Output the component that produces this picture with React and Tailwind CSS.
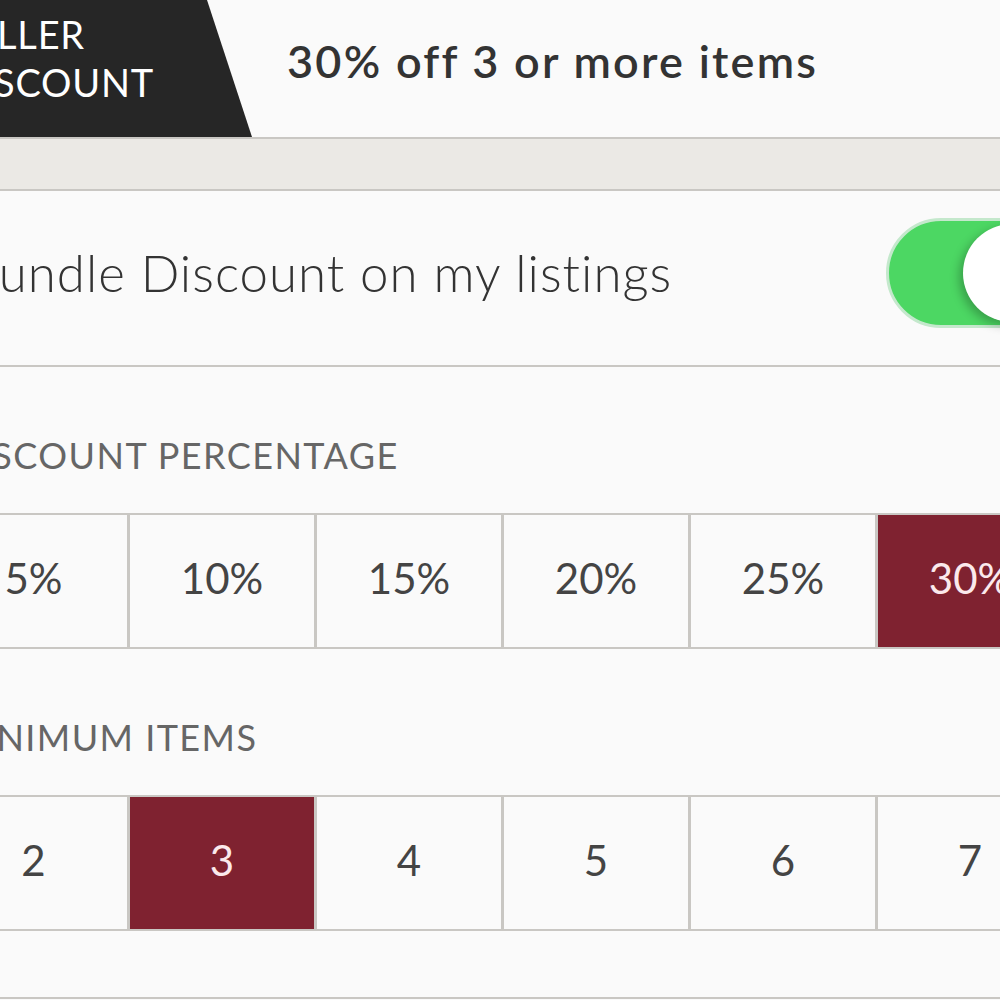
import React from 'react';

const percents = ['5%', '10%', '15%', '20%', '25%', '30%'];
const items = ['2', '3', '4', '5', '6', '7'];

function OptionRow({ options, selected }) {
  return (
    <div className="grid grid-cols-[repeat(6,187px)] h-[136px] border-y-2 border-[#c9c7c3] -ml-[60px] w-[1122px]">
      {options.map((opt, i) => {
        const active = opt === selected;
        return (
          <div
            key={opt}
            className={
              'flex items-center justify-center pb-[6px] text-[42px] ' +
              (i > 0 ? 'border-l-[3px] border-[#c9c7c3] ' : '') +
              (active ? 'bg-[#7f2230] text-[#fbe9ec]' : 'bg-[#fafafa] text-[#444]')
            }
          >
            {opt}
          </div>
        );
      })}
    </div>
  );
}

export default function App() {
  return (
    <div
      className="w-[1000px] h-[1000px] overflow-hidden bg-[#fafafa] text-[#333]"
      style={{ fontFamily: 'Lato, "Noto Sans", sans-serif' }}
    >
      <header className="relative flex items-center h-[139px] border-b-2 border-[#c9c7c3] bg-[#fafafa]">
        <div className="h-full w-[252px] shrink-0 bg-[#262626] [clip-path:polygon(0_0,207px_0,252px_100%,0_100%)] flex flex-col justify-center pb-[22px]">
          <div className="-ml-[47px] text-white text-[38px] leading-[48px] tracking-[0.02em]">
            <p>SELLER</p>
            <p>DISCOUNT</p>
          </div>
        </div>
        <h1 className="ml-[35px] -mt-[14px] text-[45px] font-semibold tracking-[0.05em] text-[#333]">30% off 3 or more items</h1>
      </header>

      <div className="h-[52px] bg-[#ebe9e5] border-b-2 border-[#c9c7c3]" />

      <section className="h-[176px] flex items-center justify-between border-b-2 border-[#c9c7c3]">
        <p className="-ml-[34px] -mt-[10px] text-[51px] font-light tracking-[0.02em] text-[#333]">Bundle Discount on my listings</p>
        <div className="relative mr-[-116px] -mt-[10px] w-[230px] h-[110px] shrink-0 rounded-full bg-[#4cd763] border-[3px] border-[#c4e8cc]">
          <div className="absolute left-[74px] top-[3px] w-[100px] h-[98px] rounded-full bg-white shadow-[-4px_4px_10px_rgba(0,0,0,0.25)]" />
        </div>
      </section>

      <p className="h-[146px] pt-[61px] -ml-[48px] text-[36px] text-[#666] tracking-[0.04em]">DISCOUNT PERCENTAGE</p>
      <OptionRow options={percents} selected="30%" />

      <p className="h-[146px] pt-[61px] -ml-[50px] text-[36px] text-[#666] tracking-[0.04em]">MINIMUM ITEMS</p>
      <OptionRow options={items} selected="3" />

      <div className="h-[68px] border-b-2 border-[#c9c7c3]" />
    </div>
  );
}
